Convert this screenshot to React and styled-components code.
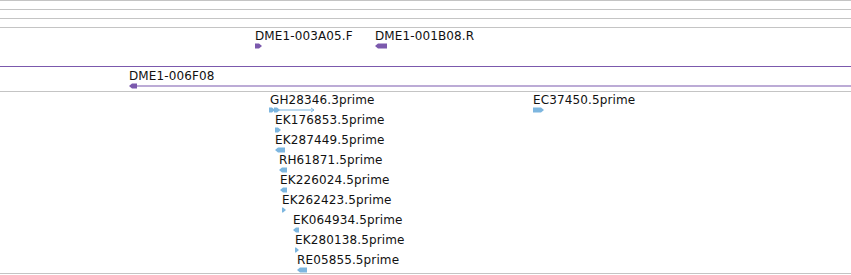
import React from "react";
import styled, { createGlobalStyle } from "styled-components";

const PURPLE = "#7b59ad";
const BLUE = "#7db6df";

const Global = createGlobalStyle`
  html, body {
    margin: 0;
    background: #fff;
    overflow: hidden;
  }
`;

const View = styled.div`
  width: 851px;
  font-family: 'DejaVu Sans', 'Liberation Sans', sans-serif;
`;

const Track = styled.div`
  position: relative;
  height: ${p => p.height}px;
  border-top: 1px solid ${p => p.line || "#c4c4c4"};
  ${p => p.last && "border-bottom: 1px solid #c4c4c4;"}
`;

const Feature = styled.div`
  position: absolute;
  display: flex;
  flex-direction: column;
  align-items: flex-start;
`;

const Label = styled.span`
  font-size: 12px;
  line-height: 13px;
  letter-spacing: 0.12px;
  color: #111;
  white-space: nowrap;
`;

const GlyphSvg = styled.svg`
  display: block;
  height: 6px;
`;

function Glyph({ width, dir, color, tail }) {
  const w = width;
  let body;
  if (dir === "right") {
    body = <polygon points={`0,0.5 ${w - 3},0.5 ${w},3 ${w - 3},5.5 0,5.5`} fill={color} />;
  } else {
    body = <polygon points={`3,0.5 ${w},0.5 ${w},5.5 3,5.5 0,3`} fill={color} />;
  }
  return (
    <GlyphSvg width={w + (tail || 0)} viewBox={`0 0 ${w + (tail || 0)} 6`}>
      {tail ? <rect x={w} y={2.5} width={tail} height={1} fill={color} /> : null}
      {body}
    </GlyphSvg>
  );
}

function Spliced({ color }) {
  return (
    <GlyphSvg width={46} viewBox="0 0 46 6">
      <rect x={5} y={2.5} width={40} height={1} fill={color} />
      <polygon points="0,0.5 3,0.5 6,3 3,5.5 0,5.5" fill={color} />
      <polygon points="5,0.5 8,0.5 11,3 8,5.5 5,5.5" fill={color} />
      <polyline points="42,1 45,3 42,5" fill="none" stroke={color} strokeWidth="1" />
    </GlyphSvg>
  );
}

const ests = [
  { name: "GH28346.3prime", x: 269, row: 0, spliced: true },
  { name: "EC37450.5prime", x: 533, row: 0, w: 11, dir: "right" },
  { name: "EK176853.5prime", x: 275, row: 1, w: 6, dir: "right" },
  { name: "EK287449.5prime", x: 275, row: 2, w: 10, dir: "left" },
  { name: "RH61871.5prime", x: 279, row: 3, w: 8, dir: "left" },
  { name: "EK226024.5prime", x: 280, row: 4, w: 7, dir: "left" },
  { name: "EK262423.5prime", x: 282, row: 5, w: 4, dir: "right" },
  { name: "EK064934.5prime", x: 293, row: 6, w: 6, dir: "left" },
  { name: "EK280138.5prime", x: 295, row: 7, w: 4, dir: "right" },
  { name: "RE05855.5prime", x: 297, row: 8, w: 10, dir: "left" },
];

export default function App() {
  return (
    <View>
      <Global />
      <Track height={8} />
      <Track height={8} />
      <Track height={8} />
      <Track height={38}>
        <Feature style={{ left: 255, top: 2 }}>
          <Label>DME1-003A05.F</Label>
          <Glyph width={7} dir="right" color={PURPLE} />
        </Feature>
        <Feature style={{ left: 375, top: 2 }}>
          <Label>DME1-001B08.R</Label>
          <Glyph width={12} dir="left" color={PURPLE} />
        </Feature>
      </Track>
      <Track height={24} line={PURPLE}>
        <Feature style={{ left: 129, top: 3 }}>
          <Label>DME1-006F08</Label>
          <Glyph width={8} dir="left" color={PURPLE} tail={714} />
        </Feature>
      </Track>
      <Track height={181} last>
        {ests.map(f => (
          <Feature key={f.name} style={{ left: f.x, top: 2 + f.row * 20 }}>
            <Label style={{ marginLeft: f.spliced ? 1 : 0 }}>{f.name}</Label>
            {f.spliced ? <Spliced color={BLUE} /> : <Glyph width={f.w} dir={f.dir} color={BLUE} />}
          </Feature>
        ))}
      </Track>
    </View>
  );
}
